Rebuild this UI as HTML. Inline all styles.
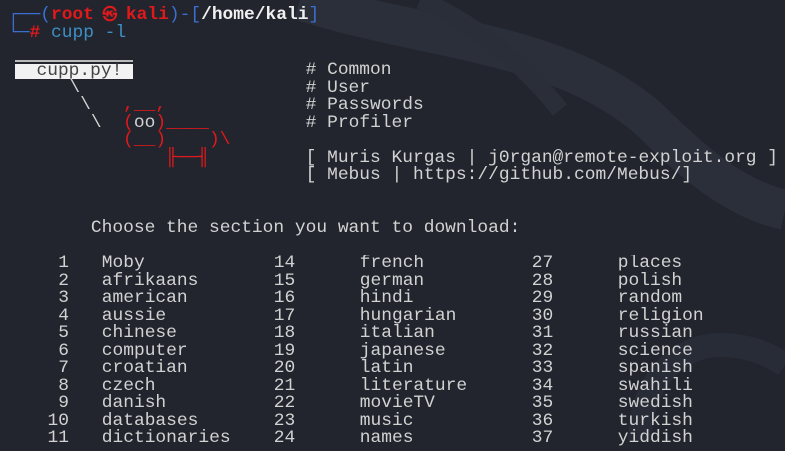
<!DOCTYPE html>
<html><head><meta charset="utf-8"><style>
html,body{margin:0;padding:0;width:785px;height:451px;overflow:hidden;}
body{background:#22252e;position:relative;font-family:"Liberation Mono","DejaVu Sans Mono",monospace;font-size:17.9px;color:#d2d2d2;}
.l{position:absolute;white-space:pre;line-height:17.5px;}
.t{height:193px;overflow:hidden;}
.r{color:#e0191b;}
.b{color:#3a6fd0;}
.w{color:#f0f0f0;font-weight:bold;}
.c{color:#3d8fc4;}
.box{position:absolute;left:15px;top:64px;width:118px;height:15px;background:#f2f2f2;color:#444;font-size:17.9px;line-height:15px;white-space:pre;}
.bar{position:absolute;left:15px;top:60px;width:118px;height:2px;background:#bbb;}
.num{text-align:right;width:40px;}
.sk{display:inline-block;width:32px;text-align:center;font-size:15px;}
</style></head><body>
<svg width="785" height="451" style="position:absolute;left:0;top:0;display:block" viewBox="0 0 785 451">
<path d="M300 0 C420 40 560 40 650 120 C700 170 740 200 785 210" stroke="#2b2f3a" stroke-width="40" fill="none"/>
<path d="M420 0 C470 20 520 60 560 110" stroke="#2a2e38" stroke-width="18" fill="none"/>
<path d="M640 440 C640 380 680 345 720 345 C750 345 770 355 785 365" stroke="#282c36" stroke-width="24" fill="none"/>
</svg>
<div class="l" style="left:8px;top:7px"><span class="b">┌──(</span><span class="r" style="font-weight:bold">root<span class="sk">㉿</span>kali</span><span class="b">)-[</span><span class="w">/home/kali</span><span class="b">]</span></div>
<div class="l" style="left:8px;top:25px"><span class="b">└─</span><span class="r" style="font-weight:bold">#</span> <span class="c">cupp -l</span></div>
<div class="bar"></div>
<div class="box">  cupp.py!</div>
<div class="l" style="left:5px;top:62px">                            # Common</div>
<div class="l" style="left:5px;top:79.5px">      \                     # User</div>
<div class="l" style="left:5px;top:97px">       \   <span class="r">,__,</span>             # Passwords</div>
<div class="l" style="left:5px;top:114.5px">        \  <span class="r">(</span>oo<span class="r">)____</span>         # Profiler</div>
<div class="l" style="left:5px;top:132px">           <span class="r">(__)    )\</span></div>
<div class="l" style="left:5px;top:149.5px">               <span class="r">╟──╢</span>         [ Muris Kurgas | j0rgan@remote-exploit.org ]</div>
<div class="l" style="left:5px;top:167px">                            [ Mebus | https://github.com/Mebus/]</div>
<div class="l" style="left:5px;top:220px">        Choose the section you want to download:</div>

<div class="l t num" style="left:29px;top:255px">1
2
3
4
5
6
7
8
9
10
11</div>
<div class="l t" style="left:101.75px;top:255px">Moby
afrikaans
american
aussie
chinese
computer
croatian
czech
danish
databases
dictionaries</div>
<div class="l t" style="left:273.75px;top:255px">14
15
16
17
18
19
20
21
22
23
24</div>
<div class="l t" style="left:359.75px;top:255px">french
german
hindi
hungarian
italian
japanese
latin
literature
movieTV
music
names</div>
<div class="l t" style="left:531.75px;top:255px">27
28
29
30
31
32
33
34
35
36
37</div>
<div class="l t" style="left:617.75px;top:255px">places
polish
random
religion
russian
science
spanish
swahili
swedish
turkish
yiddish</div>
</body></html>
